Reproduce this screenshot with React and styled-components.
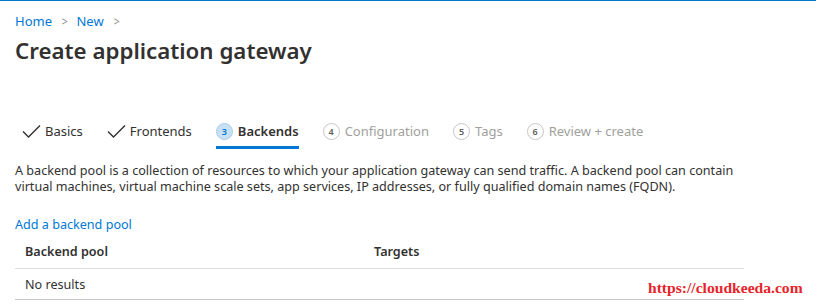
import React from "react";
import styled, { createGlobalStyle } from "styled-components";

const GlobalStyle = createGlobalStyle`
  html, body {
    margin: 0;
    padding: 0;
    background: #ffffff;
  }
  body {
    font-family: "Noto Sans", "Open Sans", sans-serif;
    color: #323130;
  }
`;

const steps = [
  { label: "Basics", state: "done" },
  { label: "Frontends", state: "done" },
  { label: "Backends", state: "active", num: 3 },
  { label: "Configuration", state: "todo", num: 4 },
  { label: "Tags", state: "todo", num: 5 },
  { label: "Review + create", state: "todo", num: 6 },
];

function Check() {
  return (
    <svg width="19" height="15" viewBox="0 0 19 15">
      <path d="M1 7.5l5.5 5.5L18 1.5" fill="none" stroke="#323130" strokeWidth="1.4" />
    </svg>
  );
}

function App() {
  return (
    <Page>
      <GlobalStyle />
      <Crumbs>
        <a>Home</a>
        <Sep>&gt;</Sep>
        <a>New</a>
        <Sep>&gt;</Sep>
      </Crumbs>
      <Title>Create application gateway</Title>

      <Tabs>
        {steps.map((s) => (
          <Tab key={s.label} state={s.state}>
            {s.state === "done" ? <Check /> : <Num state={s.state}>{s.num}</Num>}
            <span>{s.label}</span>
          </Tab>
        ))}
      </Tabs>

      <Intro>
        A backend pool is a collection of resources to which your application gateway can send traffic. A backend pool can contain
        virtual machines, virtual machine scale sets, app services, IP addresses, or fully qualified domain names (FQDN).
      </Intro>

      <AddLink>Add a backend pool</AddLink>

      <Table>
        <HeadRow>
          <Cell>Backend pool</Cell>
          <Cell>Targets</Cell>
        </HeadRow>
        <BodyRow>
          <Cell>No results</Cell>
        </BodyRow>
      </Table>

      <Watermark>https://cloudkeeda.com</Watermark>
    </Page>
  );
}

const Page = styled.div`
  position: relative;
  width: 816px;
  height: 308px;
  box-sizing: border-box;
  border-top: 1px solid #0078d4;
  padding: 11px 0 0 15px;
  overflow: hidden;
`;

const Crumbs = styled.div`
  display: flex;
  align-items: center;
  font-size: 13px;
  line-height: 18px;
  a {
    color: #0078d4;
  }
`;

const Sep = styled.span`
  color: #8a8886;
  margin: 0 8px 0 9px;
  font-size: 13px;
  transform: scaleX(0.8);
`;

const Title = styled.h1`
  margin: 5px 0 0;
  font-size: 22.3px;
  font-weight: 600;
  line-height: 32px;
  color: #323130;
`;

const Tabs = styled.div`
  display: flex;
  align-items: center;
  margin: 46px 0 0 7px;
  gap: 24px;
  height: 36px;
`;

const Tab = styled.div`
  position: relative;
  display: flex;
  align-items: center;
  gap: ${(p) => (p.state === "done" ? "4px" : "5px")};
  font-size: 13px;
  height: 36px;
  color: ${(p) => (p.state === "todo" ? "#a19f9d" : "#323130")};
  font-weight: ${(p) => (p.state === "active" ? 600 : 400)};
  &::after {
    content: "";
    display: ${(p) => (p.state === "active" ? "block" : "none")};
    position: absolute;
    left: 0;
    right: 0;
    bottom: 0;
    height: 3px;
    background: #0078d4;
  }
`;

const Num = styled.span`
  display: inline-flex;
  align-items: center;
  justify-content: center;
  width: 17px;
  height: 17px;
  border-radius: 50%;
  font-size: 9px;
  font-weight: 600;
  box-sizing: border-box;
  background: ${(p) => (p.state === "active" ? "#c7e0f4" : "#ffffff")};
  border: 1px solid ${(p) => (p.state === "active" ? "#a6cdee" : "#c8c6c4")};
  color: ${(p) => (p.state === "active" ? "#0078d4" : "#605e5c")};
`;

const Intro = styled.p`
  margin: 14px 0 0;
  font-size: 12.6px;
  line-height: 16px;
  width: 730px;
`;

const AddLink = styled.a`
  display: block;
  margin-top: 21px;
  font-size: 12.6px;
  line-height: 18px;
  color: #0078d4;
`;

const Table = styled.div`
  width: 729px;
  margin-top: 0;
  font-size: 12.6px;
`;

const HeadRow = styled.div`
  display: grid;
  grid-template-columns: 349px 1fr;
  height: 34px;
  align-items: center;
  padding-left: 10px;
  border-bottom: 1px solid #e1dfdd;
  font-weight: 600;
`;

const BodyRow = styled.div`
  display: grid;
  grid-template-columns: 349px 1fr;
  height: 30px;
  align-items: center;
  padding-left: 10px;
  border-bottom: 1px solid #c8c6c4;
`;

const Cell = styled.div``;

const Watermark = styled.div`
  position: absolute;
  left: 648px;
  top: 278px;
  font-family: "Liberation Serif", "DejaVu Serif", serif;
  font-weight: 700;
  font-size: 15.6px;
  color: #e8232a;
`;

export default App;
